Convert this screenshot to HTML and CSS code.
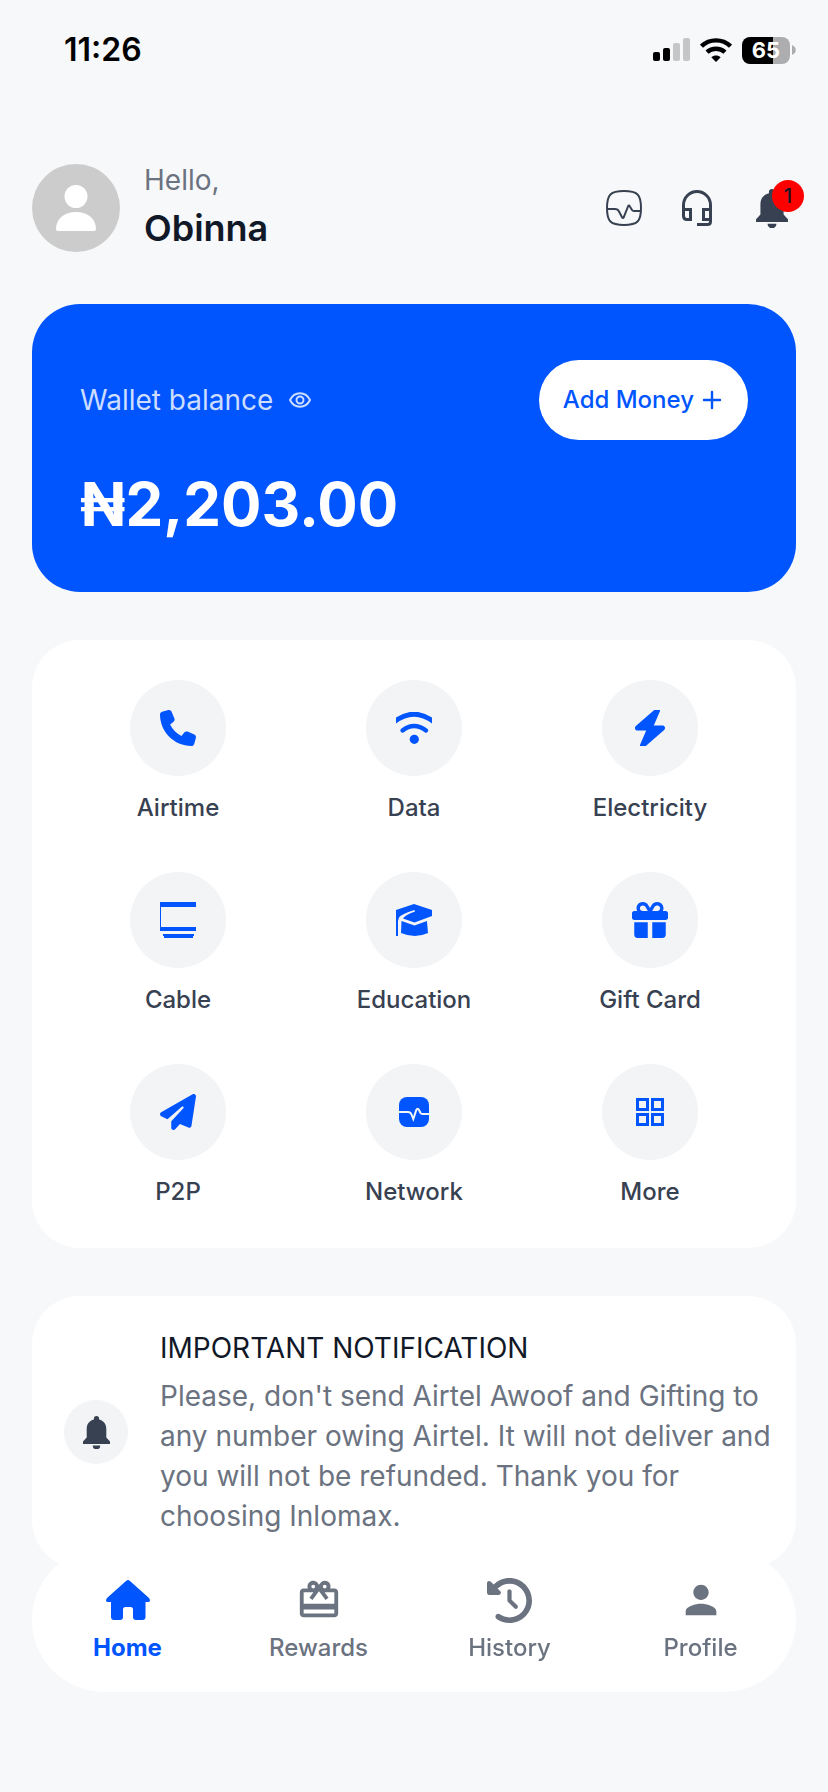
FILE: index.html
```html
<!DOCTYPE html>
<html lang="en">
<head>
<meta charset="utf-8">
<meta name="viewport" content="width=device-width, initial-scale=1">
<title>Wallet</title>
<link rel="stylesheet" href="styles.css">
</head>
<body>
<svg class="defs" width="0" height="0" aria-hidden="true">
  <symbol id="bell" viewBox="0 0 27 33"><path d="M13.500 0a2.600 2.600 0 0 1 2.600 2.600v.9C20.500 4.500 23.300 8 23.300 13v8.500L27 25.500V28H0v-2.500l3.700-4V13C3.700 8 6.500 4.500 10.900 3.500v-.9A2.600 2.600 0 0 1 13.500 0zM9.700 29.500h7.600a3.800 3.800 0 0 1-7.600 0z"/></symbol>
</svg>
<div class="status">
  <span class="time">11:26</span>
  <div class="indicators">
    <svg width="37" height="24" viewBox="0 0 37 24" aria-hidden="true"><rect y="14" width="7" height="9" rx="2"/><rect x="10" y="10" width="7" height="13" rx="2"/><g fill="#c5c6c8"><rect x="20" y="5" width="7" height="18" rx="2"/><rect x="30" y="0" width="7" height="23" rx="2"/></g></svg>
    <svg width="32" height="24" viewBox="0 0 32 24" aria-hidden="true"><g fill="none" stroke="#000" stroke-width="4.400"><path d="M1.500 8.200C9.500 .4 22.500 .4 30.500 8.200"/><path d="M7 14.200c5-4.700 13-4.700 18 0"/></g><path d="M11.300 19.200c2.700-2.400 6.700-2.400 9.400 0L16 24z"/></svg>
    <div class="battery"><span class="level">65</span><svg width="4" height="10" viewBox="0 0 4 10" aria-hidden="true"><path fill="#adadaf" d="M0 0c5 2 5 8 0 10z"/></svg></div>
  </div>
</div>
<main class="page">
  <header class="header">
    <div class="avatar"><svg width="40" height="46" viewBox="0 0 40 46" aria-hidden="true"><circle cx="20" cy="11.500" r="11.500"/><path d="M0 44C0 34 8 27 20 27s20 7 20 17q0 2-2 2H2q-2 0-2-2z"/></svg></div>
    <div class="greeting">
      <p class="hello">Hello,</p>
      <h1 class="name">Obinna</h1>
    </div>
    <div class="actions">
      <button class="action" aria-label="Network status"><svg width="36" height="36" viewBox="0 0 36 36" fill="none" stroke="currentColor" stroke-width="2" stroke-linejoin="round"><path d="M18 1c13.500 0 17 3.500 17 17s-3.500 17-17 17S1 31.500 1 18 4.500 1 18 1z"/><path d="M1 19h8q3 0 4 2.500l3.200 6q.8 1.200 1.500-.2L22 16.500q.9-1.800 1.900 0L26 20q.6 1 2 1h7"/></svg></button>
      <button class="action" aria-label="Support"><svg width="30" height="36" viewBox="0 0 30 36" fill="none" stroke="currentColor" stroke-width="3"><path d="M1.500 20v-5a13.500 13.500 0 0 1 27 0v16.500q0 3-3 3H15"/><path d="M1.500 19.500h7v10H5q-3.500 0-3.500-3.500zM28.500 19.500h-7v10h7"/></svg></button>
      <button class="action" aria-label="Notifications, 1 new"><svg width="32" height="39"><use href="#bell"/></svg><span class="badge">1</span></button>
    </div>
  </header>

  <section class="wallet">
    <div class="wallet-top">
      <div class="wallet-label">Wallet balance
        <button class="eye" aria-label="Hide balance"><svg width="22" height="16" viewBox="0 0 22 16" fill="none" stroke="currentColor" stroke-width="2"><path d="M1 8c4.500-9 15.500-9 20 0-4.500 9-15.500 9-20 0z"/><circle cx="11" cy="8" r="3.500"/></svg></button>
      </div>
      <button class="add">Add Money<svg width="24" height="24" viewBox="0 0 24 24" fill="none" stroke="currentColor" stroke-width="2.400" stroke-linecap="round" aria-hidden="true"><path d="M12 4v16M4 12h16"/></svg></button>
    </div>
    <p class="balance">₦2,203.00</p>
  </section>

  <nav class="card services" aria-label="Services">
    <a class="service" href="#"><span class="bubble"><svg width="36" height="36" viewBox="0 0 512 512"><path d="M164.900 24.600c-7.700-18.600-28-28.500-47.400-23.200l-88 24C12.100 30.200 0 46 0 64C0 311.400 200.600 512 448 512c18 0 33.800-12.100 38.600-29.500l24-88c5.300-19.400-4.600-39.700-23.200-47.400l-96-40c-16.300-6.800-35.200-2.100-46.300 11.600L304.700 368C234.300 334.700 177.300 277.700 144 207.300L193.300 167c13.700-11.200 18.400-30 11.600-46.300l-40-96z"/></svg></span>Airtime</a>
    <a class="service" href="#"><span class="bubble"><svg width="36" height="32" viewBox="0 0 36 32"><g fill="none" stroke="currentColor" stroke-width="5"><path d="M-2 10Q18-5.500 38 10"/><path d="M6.500 18.500Q18 9.500 30 18.500" stroke-width="4.400" stroke-linecap="round"/></g><circle cx="18.300" cy="27.300" r="4.600"/></svg></span>Data</a>
    <a class="service" href="#"><span class="bubble"><svg width="36" height="36" viewBox="-6 26 460 460"><path d="M349.400 44.600c5.900-13.700 1.500-29.700-10.600-38.500s-28.600-8-39.900 1.800l-256 224c-10 8.800-13.600 22.900-8.900 35.300S50.700 288 64 288H175.500L98.600 467.400c-5.900 13.700-1.500 29.700 10.600 38.500s28.600 8 39.900-1.800l256-224c10-8.800 13.600-22.900 8.900-35.300s-16.600-20.700-30-20.700H272.500L349.400 44.600z"/></svg></span>Electricity</a>
    <a class="service" href="#"><span class="bubble"><svg width="36" height="36" viewBox="0 0 36 36"><path d="M0 0h36v5H1v20h35v4H0zM3 32h31v2h-1v2H4v-2H3z"/></svg></span>Cable</a>
    <a class="service" href="#"><span class="bubble"><svg width="36" height="32" viewBox="0 0 36 32"><path d="M0 6L18 0l18 6v6l-17.500 6.500L7 14.500q2-3.500 12-7l-.5-1.500Q5 10 3 13.500L2 17v15H0zM5.500 17l13 4.500L31 17v1l1 11q-13 6-27 0z"/></svg></span>Education</a>
    <a class="service" href="#"><span class="bubble"><svg width="36" height="36" viewBox="0 0 512 512"><path d="M190.500 68.800L225.300 128H224 152c-22.100 0-40-17.900-40-40s17.900-40 40-40h2.200c14.900 0 28.800 7.900 36.300 20.800zM64 88c0 14.400 3.500 28 9.600 40H32c-17.700 0-32 14.300-32 32v64c0 17.700 14.300 32 32 32H480c17.700 0 32-14.300 32-32V160c0-17.700-14.300-32-32-32H438.400c6.100-12 9.600-25.600 9.600-40c0-48.600-39.400-88-88-88h-2.200c-31.900 0-61.500 16.900-77.700 44.400L256 85.500l-24.100-41C215.700 16.900 186.100 0 154.200 0H152C103.400 0 64 39.400 64 88zm336 0c0 22.100-17.900 40-40 40H288h-1.300l34.800-59.200C329.100 55.900 342.900 48 357.800 48H360c22.100 0 40 17.900 40 40zM32 288V464c0 26.500 21.500 48 48 48H224V288H32zM288 512H432c26.500 0 48-21.500 48-48V288H288V512z"/></svg></span>Gift Card</a>
    <a class="service" href="#"><span class="bubble"><svg width="36" height="36" viewBox="0 0 512 512"><path d="M498.100 5.600c10.100 7 15.400 19.100 13.500 31.200l-64 416c-1.500 9.700-7.400 18.200-16 23s-18.900 5.400-28 1.600L284 427.700l-68.500 74.100c-8.900 9.700-22.900 12.900-35.200 8.100S160 493.200 160 480V396.400c0-4 1.500-7.800 4.200-10.700L331.800 202.800c5.800-6.300 5.600-16-.4-22s-15.700-6.400-22-.7L106 360.800 17.700 316.600C7.100 311.300 .3 300.700 0 288.900s5.900-22.800 16.100-28.700l448-256c10.700-6.100 23.900-5.500 34 1.400z"/></svg></span>P2P</a>
    <a class="service" href="#"><span class="bubble"><svg width="30" height="30" viewBox="0 0 30 30"><rect width="30" height="30" rx="8"/><path d="M0 15h9q2.500 0 3.500 2.500l1.800 4.500 3-9q1.300-2.500 2.700 0l1.500 3q.6 1 2 1H30" fill="none" stroke="#f3f4f6" stroke-width="2"/></svg></span>Network</a>
    <a class="service" href="#"><span class="bubble"><svg width="28" height="28" viewBox="0 0 28 28" fill="none" stroke="currentColor" stroke-width="3"><path d="M1.500 1.500h10v10h-10zM16.500 1.500h10v10h-10zM1.500 16.500h10v10h-10zM16.500 16.500h10v10h-10z"/></svg></span>More</a>
  </nav>

  <section class="card notice">
    <span class="notice-icon"><svg width="27" height="33" aria-hidden="true"><use href="#bell"/></svg></span>
    <div class="notice-text">
      <h2 class="notice-title">IMPORTANT NOTIFICATION</h2>
      <p class="notice-body">Please, don't send Airtel Awoof and Gifting to any number owing Airtel. It will not deliver and you will not be refunded. Thank you for choosing Inlomax.</p>
    </div>
  </section>
</main>

<nav class="tabs" aria-label="Main">
  <a class="tab active" href="#" aria-current="page"><span class="tab-icon"><svg width="44" height="40" viewBox="0 0 44 40"><path d="M20.300.7q1.700-1.400 3.400 0L43 18q1 1 1 2.500 0 1.500-2 1.500h-2.500v15q0 3-3 3H30q-3 0-3-3v-7.500q0-2.500-2.500-2.500h-5q-2.500 0-2.500 2.500V37q0 3-3 3H8q-3 0-3-3V22H2q-2 0-2-1.500Q0 19 1 18z"/></svg></span>Home</a>
  <a class="tab" href="#"><span class="tab-icon"><svg width="46" height="46" viewBox="0 0 24 24"><path d="M20 6h-2.180c.11-.31.18-.65.18-1a2.996 2.996 0 0 0-5.500-1.650l-.5.67-.5-.68C10.960 2.540 10.050 2 9 2 7.340 2 6 3.340 6 5c0 .35.07.69.18 1H4c-1.110 0-1.990.89-1.990 2L2 19c0 1.110.89 2 2 2h16c1.110 0 2-.89 2-2V8c0-1.110-.89-2-2-2zm-5-2c.55 0 1 .45 1 1s-.45 1-1 1-1-.45-1-1 .45-1 1-1zM9 4c.55 0 1 .45 1 1s-.45 1-1 1-1-.45-1-1 .45-1 1-1zm11 15H4v-2h16v2zm0-5H4V8h5.080L7 10.830 8.620 12 11 8.760l1-1.360 1 1.360L15.380 12 17 10.830 14.920 8H20v6z"/></svg></span>Rewards</a>
  <a class="tab" href="#"><span class="tab-icon"><svg width="45" height="45" viewBox="0 0 512 512"><path d="M75 75L41 41C25.900 25.900 0 36.600 0 57.900V168c0 13.300 10.700 24 24 24H134.100c21.400 0 32.100-25.900 17-41l-30.800-30.800C155 85.500 203 64 256 64c106 0 192 86 192 192s-86 192-192 192c-40.800 0-78.600-12.700-109.700-34.400c-14.500-10.100-34.400-6.600-44.600 7.900s-6.600 34.400 7.900 44.600C151.200 495 201.700 512 256 512c141.400 0 256-114.600 256-256S397.400 0 256 0C185.300 0 121.300 28.700 75 75zm181 53c-13.300 0-24 10.700-24 24V256c0 6.400 2.500 12.500 7 17l72 72c9.400 9.400 24.600 9.400 33.900 0s9.400-24.600 0-33.900l-65-65V152c0-13.300-10.700-24-24-24z"/></svg></span>History</a>
  <a class="tab" href="#"><span class="tab-icon"><svg width="46" height="46" viewBox="0 0 24 24"><path d="M12 12c2.210 0 4-1.790 4-4s-1.790-4-4-4-4 1.790-4 4 1.790 4 4 4zm0 2c-2.670 0-8 1.340-8 4v2h16v-2c0-2.660-5.330-4-8-4z"/></svg></span>Profile</a>
</nav>
</body>
</html>
```

FILE: styles.css
```css
* {
  box-sizing: border-box;
}

body {
  margin: 0;
  background: #f7f8fa;
  color: #374151;
  font-family: Inter, "Liberation Sans", sans-serif;
  font-size: 24px;
  line-height: 32px;
}

h1, h2, p {
  margin: 0;
}

button {
  padding: 0;
  border: 0;
  background: none;
  color: inherit;
  font: inherit;
}

a {
  color: inherit;
  text-decoration: none;
}

svg {
  display: block;
  flex: none;
}

svg:not([fill]) {
  fill: currentColor;
}

.defs {
  position: absolute;
}

.status {
  display: flex;
  align-items: center;
  justify-content: space-between;
  height: 100px;
  padding: 0 32px 0 64px;
  color: #000;
}

.time {
  font-size: 32px;
  font-weight: 600;
}

.indicators {
  display: flex;
  align-items: center;
  gap: 10px;
}

.battery {
  display: flex;
  align-items: center;
  gap: 2px;
}

.level {
  width: 48px;
  border-radius: 8px;
  background: linear-gradient(90deg, #000 65%, #adadaf 65%);
  color: #fff;
  font-size: 22px;
  font-weight: 700;
  line-height: 27px;
  text-align: center;
}

.page {
  display: flex;
  flex-direction: column;
  gap: 48px;
  padding: 60px 32px 224px;
}

.header {
  display: flex;
  align-items: center;
  gap: 24px;
}

.avatar {
  display: flex;
  align-items: center;
  justify-content: center;
  width: 88px;
  height: 88px;
  border-radius: 50%;
  background: #ccc;
  color: #fff;
}

.greeting {
  flex: 1;
}

.hello {
  color: #6b7280;
  font-size: 28px;
  line-height: 40px;
}

.name {
  color: #111827;
  font-size: 36px;
  font-weight: 600;
  line-height: 56px;
}

.actions {
  display: flex;
  align-items: center;
  gap: 40px;
  padding-right: 8px;
}

.action {
  position: relative;
}

.action + .action:last-child {
  margin-left: 4px;
}

.badge {
  position: absolute;
  top: -9px;
  right: -16px;
  width: 32px;
  border-radius: 50%;
  background: #f00;
  color: #111827;
  font-size: 20px;
  font-weight: 500;
  line-height: 32px;
}

.wallet {
  display: flex;
  flex-direction: column;
  gap: 24px;
  padding: 56px 48px 48px;
  border-radius: 48px;
  background: #0055ff;
}

.wallet-top,
.wallet-label,
.add {
  display: flex;
  align-items: center;
}

.wallet-top {
  justify-content: space-between;
}

.wallet-label {
  gap: 16px;
  color: #ccddff;
  font-size: 28px;
}

.add {
  gap: 6px;
  height: 80px;
  padding: 0 24px;
  border-radius: 40px;
  background: #fff;
  color: #0055ff;
  font-weight: 500;
}

.balance {
  color: #fff;
  font-size: 60px;
  font-weight: 700;
  line-height: 80px;
}

.card {
  border-radius: 48px;
  background: #fff;
}

.services {
  display: grid;
  grid-template-columns: repeat(3, 1fr);
  row-gap: 48px;
  padding: 40px 28px;
}

.service {
  display: flex;
  flex-direction: column;
  align-items: center;
  gap: 16px;
  font-weight: 500;
}

.bubble {
  display: flex;
  align-items: center;
  justify-content: center;
  width: 96px;
  height: 96px;
  border-radius: 50%;
  background: #f3f4f6;
  color: #0055ff;
}

.notice {
  display: flex;
  align-items: center;
  gap: 32px;
  padding: 32px 20px 32px 32px;
}

.notice-icon {
  display: flex;
  flex: none;
  align-items: center;
  justify-content: center;
  width: 64px;
  height: 64px;
  border-radius: 50%;
  background: #f3f4f6;
}

.notice-text {
  display: flex;
  flex-direction: column;
  gap: 8px;
  font-size: 28px;
  line-height: 40px;
}

.notice-title {
  color: #111827;
  font-size: 28px;
  font-weight: 400;
}

.notice-body {
  color: #6b7280;
}

.tabs {
  position: fixed;
  right: 32px;
  bottom: 100px;
  left: 32px;
  display: grid;
  grid-template-columns: repeat(4, 1fr);
  padding: 28px 0;
  border-radius: 72px;
  background: #fff;
}

.tab {
  display: flex;
  flex-direction: column;
  align-items: center;
  gap: 8px;
  color: #6b7280;
  font-weight: 500;
}

.tab-icon {
  display: flex;
  align-items: center;
  justify-content: center;
  height: 48px;
}

.active {
  color: #0055ff;
  font-weight: 700;
}
```
